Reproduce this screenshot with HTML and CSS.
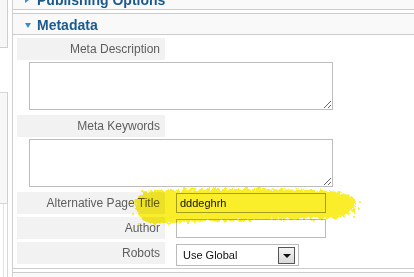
FILE: index.html
```html
<!DOCTYPE html>
<html>
<head>
<meta charset="utf-8">
<link rel="stylesheet" href="styles.css">
</head>
<body>
<div class="page">
  <div class="side">
    <div class="side-box top"></div>
    <div class="side-gap"></div>
    <div class="side-box mid"></div>
    <div class="side-rest"></div>
  </div>
  <div class="main">
    <div class="pane-head pub">
      <span class="tri-right"></span><span class="pub-title">Publishing Options</span>
    </div>
    <div class="pane">
      <div class="pane-head meta">
        <span class="tri-down"></span><span class="meta-title">Metadata</span>
      </div>
      <div class="pane-body">
        <div class="row label-row"><div class="label">Meta Description</div></div>
        <div class="row area-row"><textarea class="area"></textarea></div>
        <div class="row label-row gap7"><div class="label">Meta Keywords</div></div>
        <div class="row area-row"><textarea class="area"></textarea></div>
        <div class="row field-row gap7">
          <div class="label">Alternative Page Title</div>
          <input class="text hl" type="text" value="dddeghrh">
        </div>
        <div class="row field-row">
          <div class="label">Author</div>
          <input class="text" type="text" value="">
        </div>
        <div class="row field-row">
          <div class="label">Robots</div>
          <div class="select"><span class="select-val">Use Global</span><span class="select-btn"><span class="arrow"></span></span></div>
        </div>
      </div>
    </div>
    <div class="pane-next"></div>
  </div>
  <svg class="marker" width="414" height="277" viewBox="0 0 414 277">
    <defs>
      <filter id="rough" x="-10%" y="-30%" width="120%" height="160%">
        <feTurbulence type="fractalNoise" baseFrequency="0.3" numOctaves="2" seed="7" result="n"/>
        <feDisplacementMap in="SourceGraphic" in2="n" scale="8"/>
      </filter>
    </defs>
    <path filter="url(#rough)" fill="#faee2c" d="M135 199 L144 192 L165 190 L210 189 L260 189 L318 190 L340 192 L353 197 L357 205 L352 213 L336 218 L300 219 L250 220 L200 221 L172 223 L152 224 L142 220 L136 210 Z"/>
    <g fill="#faee2c">
      <circle cx="131" cy="203" r="1"/><circle cx="360" cy="202" r="1"/><circle cx="354" cy="217" r="1"/>
      <circle cx="139" cy="224" r="1"/><circle cx="359" cy="209" r="1"/><circle cx="133" cy="214" r="1"/>
    </g>
  </svg>
</div>
</body>
</html>
```
FILE: styles.css
```css
* { box-sizing: border-box; }
html, body { margin: 0; padding: 0; background: #fff; }
body { font-family: "Liberation Sans", Arial, sans-serif; font-size: 12px; color: #555; }

.page { position: relative; display: flex; width: 414px; height: 277px; overflow: hidden; }

.side { width: 12px; flex: none; display: flex; flex-direction: column; }
.side-box { width: 8px; background: #f7f7f7; border-right: 1px solid #cfcfcf; }
.side-box.top { height: 48px; border-bottom: 1px solid #cfcfcf; }
.side-gap { height: 44px; }
.side-box.mid { height: 112px; border-top: 1px solid #d8d8d8; border-bottom: 1px solid #d8d8d8; }
.side-rest { flex: 1; width: 8px; border-right: 1px solid #d8d8d8; border-left: 3px solid #fff; box-shadow: inset 1px 0 0 #e3e3e3; }

.main { flex: 1; border-left: 1px solid #cfcfcf; display: flex; flex-direction: column; min-width: 0; }

.pane-head { background: #f9f9f9; display: flex; align-items: center; font-weight: bold; font-size: 14px; color: #1b5a8f; }
.pane-head.pub { height: 10px; border-bottom: 1px solid #cccccc; align-items: flex-end; overflow: hidden; margin-bottom: 3px; }
.pub-title { display: block; line-height: 14px; margin-bottom: 2px; margin-left: 8px; }
.tri-right { width: 0; height: 0; border-top: 3px solid transparent; border-bottom: 3px solid transparent; border-left: 4px solid #3a8dcc; margin-left: 12px; margin-bottom: 6px; }

.pane { border-top: 1px solid #cccccc; border-bottom: 1px solid #cccccc; height: 256px; display: flex; flex-direction: column; overflow: hidden; flex: none; }
.pane-head.meta { height: 21px; border-bottom: 1px solid #cccccc; }
.tri-down { width: 0; height: 0; border-left: 3.5px solid transparent; border-right: 3.5px solid transparent; border-top: 5px solid #3a8dcc; margin-left: 12px; margin-top: 2px; }
.meta-title { margin-left: 6px; margin-top: 1px; }

.pane-body { padding: 3px 0 0 4px; display: flex; flex-direction: column; }
.row { display: flex; align-items: flex-start; }
.label-row { height: 22px; margin-bottom: 2px; }
.gap7 { margin-top: 5px; }
.label { width: 148px; height: 22px; background: #f2f2f2; color: #5e5e5e; text-align: right; padding-right: 5px; line-height: 22px; font-size: 12px; flex: none; white-space: nowrap; }
.area-row { height: 48px; padding-left: 12px; }
.area { width: 304px; height: 48px; border: 1px solid #bdbdbd; margin: 0; padding: 0; background: #fff; resize: both; display: block; }

.field-row { height: 22px; margin-bottom: 3px; }
.field-row .text, .field-row .select { margin-left: 11px; }
.text { width: 150px; height: 20px; margin-top: 1px; border: 1px solid #bbb; background: transparent; font-family: "Liberation Sans", Arial, sans-serif; font-size: 11px; color: #111; padding: 0 0 0 3px; outline: none; }
.text.hl { border-color: #a8a8a8; }
.field-row:nth-child(6) .text { height: 19px; margin-top: 2px; }

.select { width: 123px; height: 22px; margin-top: 2px; border: 1px solid #bbb; background: #fff; display: flex; align-items: center; justify-content: space-between; padding: 0 3px 0 6px; }
.select-val { font-size: 11px; color: #111; }
.select-btn { width: 17px; height: 17px; background: linear-gradient(#f4f4f4, #d8d8d8); border: 1px solid #555; display: flex; align-items: center; justify-content: center; }
.arrow { width: 0; height: 0; border-left: 4px solid transparent; border-right: 4px solid transparent; border-top: 4px solid #111; margin-top: 2px; }

.pane-next { margin-top: 3px; border-top: 1px solid #cccccc; background: #f9f9f9; flex: 1; }

.marker { position: absolute; left: 0; top: 0; pointer-events: none; mix-blend-mode: multiply; }
```
